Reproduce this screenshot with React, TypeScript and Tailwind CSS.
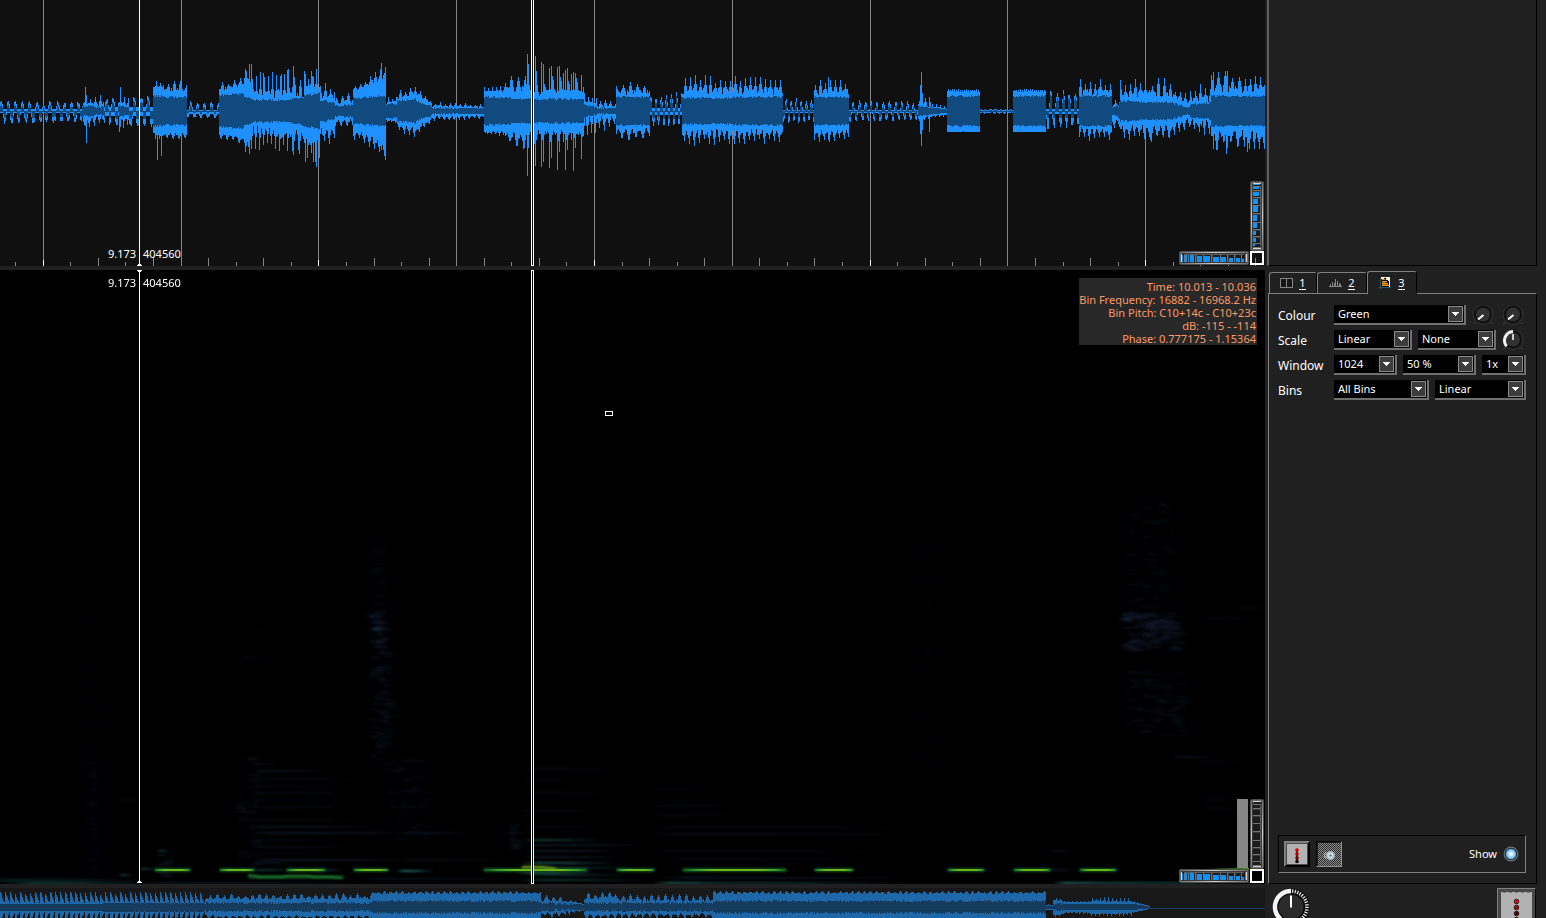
import { useState } from "react";
import type { ReactNode } from "react";

/* ---------- deterministic sample data ---------- */

const noise = (n: number) => {
  const s = Math.sin(n * 127.1 + 11.7) * 43758.5453;
  return s - Math.floor(s);
};

type Kind = "solid" | "ripple" | "pulse";

type Segment = {
  from: number;
  to: number;
  up: [number, number];
  spikeUp: [number, number];
  down: [number, number];
  spikeDown: [number, number];
  rms: [number, number];
  period: number;
  kind: Kind;
};

const seg = (
  from: number,
  to: number,
  up: [number, number],
  spikeUp: [number, number],
  down: [number, number],
  spikeDown: [number, number],
  rms: [number, number],
  period = 3,
  kind: Kind = "solid",
): Segment => ({ from, to, up, spikeUp, down, spikeDown, rms, period, kind });

const MAIN: Segment[] = [
  seg(0, 82, [2, 2], [10, 10], [1, 1], [12, 12], [3, 3], 7, "ripple"),
  seg(82, 104, [4, 4], [16, 17], [4, 3], [16, 14], [5, 4], 5),
  seg(104, 119, [4, 4], [13, 14], [4, 4], [14, 15], [3, 4], 7, "ripple"),
  seg(119, 129, [6, 5], [16, 13], [5, 4], [20, 11], [5, 4], 4),
  seg(129, 153, [4, 4], [15, 16], [4, 4], [16, 16], [4, 4], 7, "ripple"),
  seg(153, 163, [22, 23], [31, 27], [18, 24], [27, 27], [15, 15], 4),
  seg(163, 187, [19, 19], [30, 30], [21, 21], [27, 28], [14, 14], 6),
  seg(187, 219, [1, 1], [10, 10], [2, 2], [6, 6], [2, 2], 7, "ripple"),
  seg(219, 244, [19, 24], [28, 35], [20, 25], [27, 32], [16, 17], 6),
  seg(244, 252, [32, 24], [42, 44], [30, 26], [42, 40], [15, 12], 3),
  seg(252, 290, [12, 12], [38, 42], [14, 15], [38, 40], [11, 11], 4),
  seg(290, 304, [12, 12], [45, 40], [15, 18], [42, 45], [12, 14], 6),
  seg(304, 320, [18, 18], [40, 42], [20, 24], [52, 55], [15, 18], 4),
  seg(320, 335, [10, 12], [32, 26], [15, 15], [37, 28], [10, 9], 5),
  seg(335, 353, [6, 8], [14, 20], [6, 7], [16, 16], [5, 6], 6),
  seg(353, 368, [20, 24], [27, 32], [17, 22], [28, 33], [13, 14], 5),
  seg(368, 386, [24, 32], [36, 48], [22, 32], [34, 48], [14, 15], 5),
  seg(386, 397, [7, 8], [14, 14], [7, 9], [11, 12], [7, 7], 4),
  seg(397, 416, [12, 16], [20, 26], [11, 15], [20, 27], [10, 12], 5),
  seg(416, 432, [15, 5], [24, 11], [14, 5], [25, 10], [10, 4], 5),
  seg(432, 484, [4, 3], [9, 7], [4, 3], [9, 7], [3, 2], 5),
  seg(484, 505, [18, 19], [24, 25], [19, 19], [24, 24], [14, 13], 4),
  seg(505, 526, [19, 19], [35, 35], [20, 20], [34, 38], [13, 12], 7),
  seg(526, 530, [25, 20], [46, 38], [20, 20], [34, 34], [12, 12], 3),
  seg(530, 560, [14, 14], [36, 34], [18, 18], [32, 30], [12, 12], 8),
  seg(560, 584, [16, 14], [34, 32], [17, 20], [30, 28], [12, 12], 8),
  seg(584, 597, [7, 5], [19, 12], [6, 3], [28, 25], [6, 4], 4),
  seg(597, 616, [4, 3], [12, 9], [3, 3], [20, 16], [3, 2], 5),
  seg(616, 650, [16, 16], [30, 30], [16, 16], [29, 29], [14, 14], 7),
  seg(650, 682, [3, 3], [16, 19], [3, 3], [15, 15], [4, 4], 5, "ripple"),
  seg(682, 783, [16, 16], [36, 34], [17, 17], [34, 31], [13, 14], 5),
  seg(783, 814, [1, 1], [13, 13], [1, 1], [11, 11], [2, 2], 5, "ripple"),
  seg(814, 849, [16, 16], [31, 31], [17, 17], [31, 29], [14, 14], 5),
  seg(849, 918, [1, 1], [11, 10], [1, 1], [10, 9], [2, 2], 6, "ripple"),
  seg(918, 931, [5, 4], [14, 12], [5, 3], [11, 8], [5, 3], 5),
  seg(931, 947, [3, 2], [8, 4], [3, 2], [6, 4], [2, 1], 4),
  seg(947, 980, [19, 19], [22, 22], [19, 19], [22, 22], [15, 15], 2),
  seg(980, 1013, [1, 1], [2, 2], [0, 0], [2, 2], [0, 0], 5),
  seg(1013, 1046, [19, 19], [22, 22], [19, 19], [22, 22], [15, 15], 2),
  seg(1046, 1079, [2, 2], [21, 21], [2, 2], [18, 15], [3, 3], 6, "ripple"),
  seg(1079, 1112, [15, 15], [33, 32], [15, 15], [29, 28], [15, 15], 5),
  seg(1112, 1120, [3, 5], [12, 12], [6, 7], [18, 14], [3, 7], 5),
  seg(1120, 1150, [11, 14], [31, 32], [11, 13], [28, 28], [10, 9], 5),
  seg(1150, 1172, [12, 12], [34, 32], [13, 13], [30, 29], [9, 9], 6),
  seg(1172, 1190, [12, 4], [26, 16], [10, 3], [25, 15], [8, 3], 5),
  seg(1190, 1211, [6, 8], [26, 32], [6, 7], [24, 27], [7, 8], 5),
  seg(1211, 1240, [18, 18], [41, 38], [18, 18], [40, 36], [15, 15], 7),
  seg(1240, 1266, [18, 18], [36, 34], [17, 20], [37, 37], [15, 15], 5),
];

/* isolated transients: [x, height above, height below] */
const TRANSIENTS: [number, number, number][] = [
  [85, 24, 14], [86, 16, 31], [120, 24, 15], [157, 24, 48], [161, 22, 44], [245, 42, 40],
  [249, 47, 42], [251, 47, 30], [263, 38, 24], [281, 37, 26], [287, 41, 30], [293, 45, 34], [305, 37, 50],
  [311, 40, 38], [313, 34, 50], [316, 32, 55], [381, 48, 38], [385, 42, 48],
  [527, 57, 64], [528, 47, 36], [535, 55, 54], [536, 40, 28], [541, 49, 55], [543, 47, 50],
  [549, 43, 56], [551, 45, 46], [557, 44, 58], [559, 45, 40], [563, 38, 30], [565, 41, 58], [567, 43, 38],
  [571, 37, 28], [573, 39, 59], [575, 38, 36], [581, 36, 47], [828, 34, 28], [920, 26, 22], [921, 39, 34],
  [922, 18, 18], [929, 14, 20], [1213, 39, 37], [1226, 30, 42], [1227, 40, 36], [1247, 20, 40],
];

const MINI: Segment[] = [
  seg(0, 205, [2, 3], [15, 15], [2, 3], [12, 12], [3, 4], 5, "pulse"),
  seg(205, 372, [7, 7], [13, 14], [7, 7], [12, 12], [4, 4], 7),
  seg(372, 541, [13, 13], [16, 16], [11, 11], [12, 12], [6, 6], 6),
  seg(541, 566, [5, 5], [14, 9], [4, 4], [10, 8], [4, 3], 7),
  seg(566, 584, [5, 3], [8, 4], [3, 2], [8, 3], [3, 2], 5),
  seg(584, 616, [7, 9], [14, 16], [6, 6], [11, 12], [4, 4], 7),
  seg(616, 713, [5, 5], [14, 13], [5, 5], [11, 10], [4, 4], 7),
  seg(713, 1046, [13, 13], [16, 16], [11, 11], [12, 12], [6, 6], 6),
  seg(1046, 1053, [2, 1], [3, 3], [2, 1], [2, 2], [1, 1], 4),
  seg(1053, 1063, [6, 6], [9, 8], [6, 6], [9, 8], [3, 3], 4),
  seg(1063, 1090, [5, 5], [6, 6], [4, 4], [6, 6], [2, 2], 4),
  seg(1090, 1132, [5, 4], [10, 9], [5, 4], [9, 8], [2, 2], 4),
  seg(1132, 1150, [4, 1], [7, 1], [4, 1], [6, 1], [2, 0], 3),
];

function tracePaths(segments: Segment[], centre: number, transients: [number, number, number][] = []) {
  let peak = "";
  let body = "";
  const column = (x: number, top: number, bottom: number) => `M${x} ${centre - top}h1V${centre + bottom + 1}h-1z`;
  for (const s of segments) {
    for (let x = s.from; x < s.to; x++) {
      const t = (x - s.from) / (s.to - s.from);
      const mix = (p: [number, number]) => p[0] + (p[1] - p[0]) * t;
      const rms = Math.round(mix(s.rms));
      if (s.kind === "ripple") {
        const phase = Math.sin((x / s.period) * Math.PI * 2 + noise(Math.floor(x / 11)) * 1.2);
        const jitter = 0.75 + noise(x) * 0.3;
        const top = Math.round(mix(s.up) + Math.sqrt(Math.max(0, phase)) * (mix(s.spikeUp) - mix(s.up)) * jitter);
        const bottom = Math.round(mix(s.down) + Math.sqrt(Math.max(0, -phase)) * (mix(s.spikeDown) - mix(s.down)) * jitter);
        peak += column(x, top, bottom);
        body += column(x, Math.max(0, top - 4), Math.max(0, Math.min(bottom - 4, rms + 3)));
        continue;
      }
      if (s.kind === "pulse") {
        const cell = Math.floor(x / s.period);
        const part = (x % s.period) / s.period;
        const level = Math.pow(1 - part, 1.4) * (0.75 + noise(cell) * 0.4) + noise(x) * 0.1;
        const top = Math.round(mix(s.up) + (mix(s.spikeUp) - mix(s.up)) * Math.min(1, level));
        peak += column(x, top, Math.min(top, 12));
        body += column(x, Math.min(rms, top - 1), Math.min(rms, top - 1));
        continue;
      }
      const cell = Math.round(x / s.period);
      const beat = Math.pow(Math.abs(Math.cos((x / s.period) * Math.PI)), 3) * (0.6 + noise(cell + s.from) * 0.5);
      const top = mix(s.up) + (mix(s.spikeUp) - mix(s.up)) * Math.min(1, Math.max(beat, noise(x) * 0.4));
      const lowCell = Math.round(x / s.period + 0.22);
      const low = Math.pow(Math.abs(Math.cos((x / s.period) * Math.PI + 0.7)), 3) * (0.6 + noise(lowCell + s.from + 50) * 0.5);
      const bottom = mix(s.down) + (mix(s.spikeDown) - mix(s.down)) * Math.min(1, Math.max(low, noise(x + 90) * 0.4));
      peak += column(x, Math.round(top), Math.round(bottom));
      const wobble = rms > 2 ? Math.round(noise(x + 33) * 2) : 0;
      body += column(
        x,
        Math.max(0, Math.min(rms - wobble + 1, Math.round(top) - 1)),
        Math.max(0, Math.min(rms - wobble, Math.round(bottom) - 1)),
      );
    }
  }
  for (const [x, top, bottom] of transients) {
    peak += column(x, top, bottom);
  }
  return { peak, body };
}

const mainTrace = tracePaths(MAIN, 111, TRANSIENTS);
const miniTrace = tracePaths(MINI, 19);

const TICKS = Array.from({ length: 46 }, (_, i) => {
  const k = i - 1;
  return { k, x: Math.floor(43.3 + k * 27.56) };
});

/* ---------- waveform and spectrogram ---------- */

function Waveform() {
  return (
    <svg className="block size-full" shapeRendering="crispEdges" aria-label="Waveform">
      {TICKS.map(({ k, x }) =>
        k % 5 === 0 ? (
          <rect key={k} x={x} y={0} width={1} height={266} fill="#848484" />
        ) : (
          <rect key={k} x={x} y={k % 2 === 0 ? 258 : 262} width={1} height={k % 2 === 0 ? 8 : 4} fill="#848484" />
        ),
      )}
      {TICKS.filter(({ k }) => k % 10 === 0).map(({ k, x }) => (
        <rect key={k} x={x} y={260} width={1} height={6} fill="#fff" />
      ))}
      <path d={mainTrace.peak} fill="#1e90ff" />
      <path d={mainTrace.body} fill="#104a7e" />
      <rect x={0} y={111} width="100%" height={1} fill="#104a7e" />
      <path d="M139 0h1v264h1v1h1v1h-5v-1h1v-1h1z" fill="#fff" />
      <rect x={531} y={-2} width={3} height={268} fill="#fff" />
      <rect x={532} y={-2} width={1} height={267} fill="#101010" />
    </svg>
  );
}

/* [x, y, width] of the strong partials */
const TONES: [number, number, number][] = [
  [154, 599, 37], [219, 599, 36], [286, 599, 40], [353, 599, 36], [483, 599, 105], [616, 599, 39],
  [682, 599, 105], [814, 599, 40], [947, 599, 38], [1013, 599, 38], [1079, 599, 38],
];

/* [x, y, width, opacity] of the teal partials */
const PARTIALS: [number, number, number, number][] = [
  [396, 600, 40, 1], [250, 599, 46, 0.5], [312, 599, 34, 0.5], [138, 598, 20, 0.5], [516, 602, 84, 0.9],
  [520, 592, 100, 0.8], [516, 597, 120, 0.6], [521, 569, 85, 0.6], [652, 612, 90, 0.9], [700, 612, 216, 0.5],
  [1052, 612, 70, 1], [1080, 612, 200, 0.7], [0, 612, 170, 0.7], [-30, 609, 190, 0.4], [516, 609, 140, 0.5],
  [118, 604, 16, 0.5], [157, 580, 14, 0.5], [524, 604, 120, 0.4],
];

/* [x, y, width, opacity] of the bluish harmonics */
const HARMONICS: [number, number, number, number][] = [
  [156, 584, 12, 0.5], [252, 562, 170, 0.6], [250, 556, 130, 0.5], [252, 589, 170, 0.6], [253, 500, 80, 0.4],
  [252, 493, 30, 0.3], [252, 508, 110, 0.25], [252, 515, 100, 0.2], [252, 522, 110, 0.25], [252, 529, 90, 0.2],
  [252, 536, 110, 0.25], [252, 549, 110, 0.25], [252, 569, 90, 0.22], [252, 576, 110, 0.3], [252, 583, 90, 0.2],
  [252, 592, 40, 0.5], [400, 562, 75, 0.45], [400, 589, 110, 0.3], [360, 608, 170, 0.4], [140, 612, 240, 0.5],
  [524, 574, 120, 0.6], [524, 580, 100, 0.6], [524, 586, 100, 0.6], [520, 498, 110, 0.25], [520, 509, 80, 0.15],
  [520, 522, 100, 0.22], [520, 540, 80, 0.25], [520, 556, 90, 0.2], [650, 518, 90, 0.15], [650, 535, 90, 0.22],
  [650, 544, 100, 0.22], [650, 556, 270, 0.25], [650, 563, 280, 0.35], [650, 580, 240, 0.25], [660, 588, 240, 0.2],
  [660, 607, 260, 0.5], [1172, 486, 44, 0.45], [1196, 490, 60, 0.2], [1200, 528, 50, 0.2], [1200, 537, 60, 0.2],
  [1050, 580, 24, 0.4], [1040, 599, 36, 0.6], [1200, 347, 60, 0.2], [1240, 337, 30, 0.2], [240, 386, 34, 0.2],
  [250, 360, 20, 0.15], [400, 490, 34, 0.3], [400, 520, 34, 0.25], [400, 536, 34, 0.25], [118, 529, 40, 0.15],
];

/* [x, y, width, height, strokes, opacity] of the hiss clouds */
const CLOUDS: [number, number, number, number, number, number][] = [
  [368, 270, 18, 90, 70, 0.08], [366, 340, 22, 40, 50, 0.15], [368, 380, 26, 115, 150, 0.1],
  [1122, 230, 54, 120, 200, 0.08], [1120, 342, 62, 38, 150, 0.18], [1122, 400, 66, 66, 140, 0.11],
  [84, 300, 18, 300, 150, 0.05], [84, 490, 14, 120, 60, 0.07], [246, 486, 14, 120, 80, 0.09],
  [234, 526, 12, 60, 30, 0.09], [382, 490, 50, 80, 100, 0.08], [918, 270, 14, 300, 120, 0.05],
  [506, 552, 14, 26, 20, 0.14], [157, 586, 14, 20, 12, 0.2],
];

function Spectrogram() {
  return (
    <svg className="block size-full" aria-label="Spectrogram">
      <defs>
        <linearGradient id="tone">
          <stop offset="0" stopColor="#2c9a34" stopOpacity="0" />
          <stop offset="0.14" stopColor="#2f9c2e" />
          <stop offset="0.3" stopColor="#6cb31c" />
          <stop offset="0.75" stopColor="#6cb31c" />
          <stop offset="0.9" stopColor="#2f9c2e" />
          <stop offset="1" stopColor="#2c9a34" stopOpacity="0" />
        </linearGradient>
        <linearGradient id="rise">
          <stop offset="0" stopColor="#2f9c2e" stopOpacity="0" />
          <stop offset="1" stopColor="#4aa028" />
        </linearGradient>
        <linearGradient id="weak">
          <stop offset="0" stopColor="#246a62" stopOpacity="0" />
          <stop offset="0.2" stopColor="#246a62" />
          <stop offset="0.5" stopColor="#1d5358" />
          <stop offset="1" stopColor="#173a48" stopOpacity="0" />
        </linearGradient>
        <linearGradient id="faint">
          <stop offset="0" stopColor="#1a2a44" stopOpacity="0" />
          <stop offset="0.1" stopColor="#1a2a44" />
          <stop offset="0.6" stopColor="#15223a" />
          <stop offset="1" stopColor="#121c30" stopOpacity="0" />
        </linearGradient>
        <filter id="soft" x="-5%" y="-300%" width="110%" height="700%">
          <feGaussianBlur stdDeviation="1.2 0.8" />
        </filter>
        <filter id="cloud">
          <feGaussianBlur stdDeviation="2.4 0.8" />
        </filter>
      </defs>
      <g filter="url(#cloud)">
        {CLOUDS.map(([x, y, w, h, n, o], c) =>
          Array.from({ length: n }, (_, i) => (
            <rect
              key={`${c}-${i}`}
              x={x + noise(i + c * 71) * (w - 6)}
              y={y + noise(i * 3 + c * 13) * h}
              width={6 + noise(i + 7) * 6}
              height={2}
              fill="#28365c"
              opacity={o * (0.5 + noise(i + 19))}
            />
          )),
        )}
        <rect x={1121} y={348} width={10} height={2} fill="#26506a" opacity={0.5} />
        <rect x={373} y={358} width={8} height={2} fill="#26506a" opacity={0.7} />
      </g>
      {HARMONICS.map(([x, y, w, o], i) => (
        <rect key={i} x={x} y={y} width={w} height={2} fill="url(#faint)" opacity={o} filter="url(#soft)" />
      ))}
      {PARTIALS.map(([x, y, w, o], i) => (
        <rect key={i} x={x} y={y} width={w} height={2} fill="url(#weak)" opacity={o} filter="url(#soft)" />
      ))}
      <rect x={248} y={605} width={96} height={4} fill="#166a2c" opacity={0.5} filter="url(#soft)" />
      <path d="M248 605l12 2h22l6-1h20l6 1h16l12 1" fill="none" stroke="#29933a" strokeWidth={1.6} filter="url(#soft)" />
      {TONES.map(([x, y, w]) => (
        <g key={x}>
          <rect x={x} y={y - 1} width={w} height={4} rx={2} fill="#126024" opacity={0.85} filter="url(#soft)" />
          <rect x={x} y={y} width={w} height={2} fill="url(#tone)" />
        </g>
      ))}
      <rect x={1205} y={598} width={44} height={2} fill="url(#rise)" />
      <path d="M522 597h20l14 2" fill="none" stroke="#7cab14" strokeWidth={2} filter="url(#soft)" />
      <g shapeRendering="crispEdges">
        <path d="M137 0h5v1h-1v1h-1v609h1v1h1v1h-5v-1h1v-1h1V2h-1V1h-1z" fill="#fff" />
        <rect x={531} y={0} width={3} height={614} fill="#fff" />
        <rect x={532} y={1} width={1} height={612} fill="#000" />
        <rect x={605} y={141} width={8} height={5} fill="#fff" />
        <rect x={606} y={142} width={6} height={3} fill="#000" />
      </g>
    </svg>
  );
}

function Overview() {
  return (
    <svg className="block size-full" shapeRendering="crispEdges" aria-label="Overview">
      <path d={miniTrace.peak} fill="#1e68aa" />
      <path d={miniTrace.body} fill="#163a5c" />
      <rect x={0} y={20} width="100%" height={1} fill="#163f68" />
    </svg>
  );
}

/* ---------- zoom wheels ---------- */

/* [offset, length] of the notches along a wheel */
const NOTCHES: [number, number][] = [
  [3, 1], [6, 2], [11, 4], [18, 5], [25, 6], [34, 6], [42, 5], [50, 4], [57, 4], [63, 2],
];

function ThumbWheel({ vertical = false, level, label }: { vertical?: boolean; level: number; label: string }) {
  const id = `wheel-${vertical ? "v" : "h"}`;
  return (
    <svg
      role="img"
      aria-label={label}
      className={vertical ? "block h-[70px] w-[14px]" : "block h-[14px] w-[70px]"}
      viewBox={vertical ? "0 0 14 70" : "0 0 70 14"}
    >
      <defs>
        <linearGradient id={id}>
          <stop offset="0" stopColor="#6a6a6a" />
          <stop offset="0.5" stopColor="#cccccc" />
          <stop offset="1" stopColor="#6a6a6a" />
        </linearGradient>
      </defs>
      <g transform={vertical ? "translate(14 0) rotate(90)" : undefined}>
        <rect x={0.5} y={0.5} width={69} height={13} rx={1} fill="#262626" stroke="#4c4c4c" />
        <rect x={1} y={1} width={68} height={12} fill={`url(#${id})`} />
        <rect x={2} y={2} width={66} height={10} fill="#3a3a3a" />
        <rect x={2} y={3} width={1} height={8} fill="#d0d0d0" />
        <rect x={67} y={3} width={1} height={8} fill="#d0d0d0" />
        {NOTCHES.map(([x, w], i) => {
          const h = Math.max(0, Math.min(7, Math.round(level - i * 0.55)));
          return (
            <g key={x} shapeRendering="crispEdges">
              <rect x={x} y={3} width={w + 1} height={8} fill="#1c1c1c" />
              <rect x={x} y={11 - h} width={w} height={h} fill="#0a94ff" />
              <rect x={x + w + 1} y={3} width={1} height={8} fill="#747474" />
            </g>
          );
        })}
        <rect x={5} y={3} width={60} height={1} fill="#5c5c5c" />
      </g>
    </svg>
  );
}

function ZoomCorner({ levels, gain = false }: { levels: [number, number]; gain?: boolean }) {
  return (
    <div className="absolute right-px bottom-px flex flex-col items-end">
      <div className="flex gap-0.5">
        {gain && <div className="h-[69px] w-[11px] bg-[#868686]" />}
        <ThumbWheel vertical level={levels[0]} label="Vertical zoom" />
      </div>
      <div className="flex items-center gap-px">
        <ThumbWheel level={levels[1]} label="Horizontal zoom" />
        <button type="button" aria-label="Reset zoom" className="size-[14px] border-2 border-white" />
      </div>
    </div>
  );
}

/* ---------- small controls ---------- */

function Pick({ label, options, className }: { label: string; options: string[]; className: string }) {
  return (
    <span className={`relative block h-5 ${className}`}>
      <select
        aria-label={label}
        className="block size-full appearance-none rounded-none border-r-2 border-b-2 border-[#707070] bg-black pl-1 text-[11px] leading-[18px] text-white outline-none"
      >
        {options.map((o) => (
          <option key={o}>{o}</option>
        ))}
      </select>
      <span className="pointer-events-none absolute top-px right-[3px] flex h-4 w-[15px] items-center justify-center border border-[#8a8a8a] bg-[#3c3c3c]">
        <svg className="h-1 w-[7px]" viewBox="0 0 7 4" shapeRendering="crispEdges">
          <path d="M0 0h7v1H6v1H5v1H4v1H3V3H2V2H1V1H0z" fill="#fff" />
        </svg>
      </span>
    </span>
  );
}

function Knob({ label, active = false }: { label: string; active?: boolean }) {
  return (
    <button type="button" aria-label={label} className="block size-[22px] shrink-0">
      <svg viewBox="0 0 22 22" className="block size-full">
        <circle cx={11} cy={9.5} r={10} fill="#161616" stroke="#3a3a3a" strokeWidth={0.8} />
        <circle cx={11} cy={9.5} r={7.5} fill="#313131" stroke="#0c0c0c" strokeWidth={1} />
        <path d="M3 17.500l-1.500 1.500M19 17.500l1.500 1.500" stroke="#555" strokeWidth={1} />
        {active ? (
          <>
            <path d="M4.600 16.200A9 9 0 0 1 11 1.500" fill="none" stroke="#f2f2f2" strokeWidth={3} />
            <path d="M11 4v6" stroke="#fff" strokeWidth={1.5} />
          </>
        ) : (
          <path d="M11.500 10L6 14.500" stroke="#fff" strokeWidth={2} />
        )}
      </svg>
    </button>
  );
}

function BigKnob() {
  const ticks = Array.from({ length: 15 }, (_, i) => 6 + i * 9.5);
  return (
    <button type="button" aria-label="Volume" className="size-[38px]">
      <svg viewBox="0 0 38 38" className="block size-full">
        <circle cx={19} cy={19} r={18.5} fill="#080808" />
        <path d="M8.700 31.300A16 16 0 0 1 19 3" fill="none" stroke="#f4f4f4" strokeWidth={4.5} />
        {ticks.map((a) => (
          <path key={a} d="M19 1.200v3.600" stroke="#e4e4e4" strokeWidth={1.3} transform={`rotate(${a} 19 19)`} />
        ))}
        <circle cx={19} cy={19} r={12.5} fill="#2b2b2b" />
        <path d="M19 7.500v12" stroke="#fff" strokeWidth={2} />
      </svg>
    </button>
  );
}

function Meter({ large = false }: { large?: boolean }) {
  return large ? (
    <svg viewBox="0 0 31 34" className="block h-[34px] w-[31px]">
      <rect width={31} height={34} fill="#b2b2b2" />
      <path d="M2 .5h28" stroke="#777" strokeDasharray="3 3" />
      <circle cx={15.5} cy={9.5} r={2.3} fill="#f00000" stroke="#222" />
      <circle cx={15.5} cy={15.5} r={2.3} fill="#b00000" stroke="#222" />
      <circle cx={15.5} cy={21.5} r={2.3} fill="#5c0000" stroke="#222" />
      <circle cx={15.5} cy={27.5} r={2.3} fill="#200000" stroke="#222" />
    </svg>
  ) : (
    <svg viewBox="0 0 20 20" className="block size-5">
      <rect width={20} height={20} fill="#b2b2b2" />
      <path d="M10 5v14" stroke="#222" strokeWidth={2} />
      <circle cx={10} cy={6} r={1.8} fill="#e00000" />
      <circle cx={10} cy={10} r={1.8} fill="#b80000" />
      <circle cx={10} cy={14} r={1.8} fill="#780000" />
      <circle cx={10} cy={17.5} r={1.8} fill="#1c0404" />
    </svg>
  );
}

function SnapGlyph() {
  return (
    <svg viewBox="0 0 23 23" className="block size-[23px]">
      <defs>
        <pattern id="checks" width={2} height={2} patternUnits="userSpaceOnUse">
          <rect width={2} height={2} fill="#2c2c2c" />
          <path d="M0 0h1v1H0zM1 1h1v1H1z" fill="#8a8a8a" shapeRendering="crispEdges" />
        </pattern>
      </defs>
      <rect width={23} height={23} fill="url(#checks)" />
      <path d="M8 9a5 5 0 0 0 0 7" fill="none" stroke="#c8d4d8" strokeWidth={1} />
      <circle cx={12.5} cy={12.5} r={4.5} fill="#a8bac2" />
      <circle cx={12.5} cy={12.5} r={2.2} fill="none" stroke="#e6eef2" />
      <circle cx={12.5} cy={12.5} r={0.8} fill="#4c5c64" />
    </svg>
  );
}

const TAB_ICONS: ReactNode[] = [
  <svg key="a" viewBox="0 0 13 10" className="h-2.5 w-[13px]" shapeRendering="crispEdges">
    <path d="M0 0h13v10H0z" fill="#858585" />
    <path d="M1 1h5v8H1zM7 1h5v8H7z" fill="#151515" />
  </svg>,
  <svg key="b" viewBox="0 0 13 8" className="h-2 w-[13px]" shapeRendering="crispEdges">
    <path d="M0 7h13v1H0zM1 5h1v2H1zM3 3h1v4H3zM5 4h1v3H5zM6 0h1v7H6zM8 2h1v5H8zM10 4h1v3h-1zM11 5h1v2h-1z" fill="#858585" />
  </svg>,
  <svg key="c" viewBox="0 0 12 12" className="size-3" shapeRendering="crispEdges">
    <path d="M2 0h9v10H2z" fill="#0d0d0d" />
    <path d="M2 0h3v2H2zM2 0h9v1H2zM10 0h1v10h-1z" fill="#f0f0f0" />
    <path d="M7 1h3v3H9V3H7z" fill="#f0f0f0" />
    <path d="M3 2h3v1H3zM3 4h5v1H3zM3 6h6v1H3zM3 8h7v1H3z" fill="#f09a28" />
    <path d="M3 5h4v1H3zM3 7h6v1H3z" fill="#a85c14" />
    <path d="M0 10h12v1H0zM1 1h1v11H1z" fill="#2c5a6c" />
  </svg>,
];

/* ---------- panels ---------- */

function CursorLabel({ className }: { className: string }) {
  return (
    <div className={`absolute left-[108px] flex gap-[7px] text-[11px] leading-4 text-white ${className}`}>
      <span className="w-7">9.173</span>
      <span>404560</span>
    </div>
  );
}

const READOUT = [
  "Time: 10.013 - 10.036",
  "Bin Frequency: 16882 - 16968.2 Hz",
  "Bin Pitch: C10+14c - C10+23c",
  "dB: -115 - -114",
  "Phase: 0.777175 - 1.15364",
];

function Row({ label, children }: { label: string; children: ReactNode }) {
  return (
    <div className="flex h-[25px] items-start">
      <span className="w-14 shrink-0 text-[12px] leading-[22px]">{label}</span>
      <div className="flex items-start gap-[6px]">{children}</div>
    </div>
  );
}

function PropertyTabs() {
  const [active, setActive] = useState(2);
  return (
    <div className="mr-[9px] ml-0.5 flex flex-1 flex-col">
      <div role="tablist" className="flex h-[23px] items-end pl-px">
        {TAB_ICONS.map((icon, i) => (
          <button
            key={i}
            type="button"
            role="tab"
            aria-selected={active === i}
            onClick={() => setActive(i)}
            className={
              active === i
                ? "relative z-10 -mb-px flex h-[23px] w-[50px] items-center justify-center gap-[7px] rounded-t-[3px] border-t border-r border-l border-t-[#808080] border-r-black border-l-[#808080] bg-[#202020] text-[11px]"
                : "flex h-[21px] w-12 items-center justify-center gap-[6px] rounded-t-[3px] border-t border-r border-l border-t-[#808080] border-r-black border-l-[#808080] text-[11px] nth-2:w-[50px]"
            }
          >
            {icon}
            <span className="border-b border-white leading-3">{i + 1}</span>
          </button>
        ))}
      </div>
      <div role="tabpanel" className="flex flex-1 flex-col border border-t-[#808080] border-r-black border-b-black border-l-[#808080] pt-[11px] pr-[10px] pb-[10px] pl-[9px]">
        <Row label="Colour">
          <Pick label="Colour" options={["Green", "Sunset", "White on Black"]} className="w-[132px]" />
          <div className="flex gap-2">
            <Knob label="Threshold" />
            <Knob label="Colour rotation" />
          </div>
        </Row>
        <Row label="Scale">
          <Pick label="Scale" options={["Linear", "Meter", "dBV"]} className="w-[78px]" />
          <Pick label="Normalization" options={["None", "Column", "View"]} className="w-[78px]" />
          <Knob label="Gain" active />
        </Row>
        <Row label="Window">
          <Pick label="Window size" options={["1024", "2048", "4096"]} className="w-[63px]" />
          <Pick label="Window overlap" options={["50 %", "75 %", "93.75 %"]} className="w-[73px]" />
          <Pick label="Oversampling" options={["1x", "2x", "4x"]} className="w-11" />
        </Row>
        <Row label="Bins">
          <Pick label="Bins" options={["All Bins", "Peak Bins", "Frequencies"]} className="w-[95px]" />
          <Pick label="Frequency scale" options={["Linear", "Log"]} className="w-[91px]" />
        </Row>
        <div className="mt-auto flex h-[38px] items-center border border-t-black border-r-[#808080] border-b-[#808080] border-l-black pr-1.5 pl-[5px]">
          <button type="button" aria-label="Play parameters" className="flex size-[26px] items-center justify-center border-2 border-t-[#808080] border-r-black border-b-black border-l-[#808080] bg-[#4a4a4a]">
            <Meter />
          </button>
          <button type="button" aria-label="Snap" className="ml-1.5 flex size-[26px] items-center justify-center border border-t-black border-r-[#909090] border-b-[#909090] border-l-black">
            <SnapGlyph />
          </button>
          <button type="button" className="ml-auto flex items-center gap-1.5 text-[11px]">
            Show
            <svg viewBox="0 0 16 16" className="size-4">
              <defs>
                <radialGradient id="led" cx="0.5" cy="0.5">
                  <stop offset="0" stopColor="#fff" />
                  <stop offset="0.4" stopColor="#c8e8ff" />
                  <stop offset="1" stopColor="#4aa4e8" />
                </radialGradient>
              </defs>
              <circle cx={8} cy={8} r={6.8} fill="#202a30" stroke="#6c7478" strokeWidth={1.2} />
              <circle cx={8} cy={8} r={5.2} fill="url(#led)" />
            </svg>
          </button>
        </div>
      </div>
    </div>
  );
}

export default function App() {
  return (
    <div className="grid h-screen min-h-[600px] grid-cols-[minmax(0,1fr)_280px] grid-rows-[266px_minmax(0,1fr)_30px] gap-x-px gap-y-1 overflow-hidden bg-[#202020] font-['Noto_Sans',sans-serif] text-white">
      <section className="relative overflow-hidden bg-[#101010]">
        <Waveform />
        <CursorLabel className="bottom-1" />
        <ZoomCorner levels={[7, 8]} />
      </section>
      <aside className="flex">
        <div className="mr-[9px] ml-px flex-1 border-r border-b border-l-2 border-r-black border-b-black border-l-[#606060]" />
      </aside>

      <section className="relative overflow-hidden bg-black">
        <Spectrogram />
        <CursorLabel className="top-[5px]" />
        <div className="absolute top-2 right-2 w-[178px] bg-[#282828] pr-px text-right text-[11px] leading-[13px] whitespace-nowrap text-[#ff9966]">
          {READOUT.map((line) => (
            <p key={line} className="first:pt-0.5">{line}</p>
          ))}
        </div>
        <ZoomCorner levels={[1, 8]} gain />
      </section>
      <aside className="flex">
        <PropertyTabs />
      </aside>

      <section className="overflow-hidden bg-[#181818]">
        <Overview />
      </section>
      <aside className="flex items-start justify-between overflow-hidden pr-[10px] pl-[6px]">
        <BigKnob />
        <button type="button" aria-label="Output level" className="border border-t-[#808080] border-r-black border-b-black border-l-[#808080] bg-[#484848] p-[3px]">
          <Meter large />
        </button>
      </aside>
    </div>
  );
}
